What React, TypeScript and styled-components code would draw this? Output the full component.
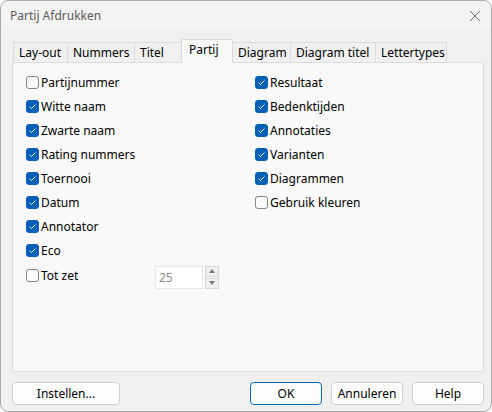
import React, { useState } from 'react';
import styled, { createGlobalStyle } from 'styled-components';

const GlobalStyle = createGlobalStyle`
  html, body {
    margin: 0;
    padding: 0;
    background: #ffffff;
  }
  body {
    font-family: "Noto Sans", "Open Sans", "Liberation Sans", sans-serif;
    font-size: 12px;
    color: #000;
  }
`;

const Window = styled.div`
  width: 492px;
  height: 412px;
  box-sizing: border-box;
  border: 1px solid #a9a9a9;
  border-radius: 8px;
  background: #f0f0f0;
  display: flex;
  flex-direction: column;
  overflow: hidden;
`;

const TitleBar = styled.div`
  height: 29px;
  display: flex;
  align-items: center;
  justify-content: space-between;
  padding: 0 6px 0 9px;
  background: #f3f3f3;
  color: #5c5c5c;
  font-size: 12px;
`;

const CloseButton = styled.div`
  width: 20px;
  height: 20px;
  display: flex;
  align-items: center;
  justify-content: center;
`;

const Body = styled.div`
  flex: 1;
  display: flex;
  flex-direction: column;
  padding: 9px 7px 6px 11px;
`;

const TabStrip = styled.div`
  display: flex;
  align-items: flex-end;
  height: 23px;
  padding-left: 1px;
`;

const Tab = styled.div<{ $active?: boolean; $width: number }>`
  width: ${({ $width }) => $width}px;
  height: ${({ $active }) => ($active ? '24px' : '20px')};
  box-sizing: border-box;
  padding: ${({ $active }) => ($active ? '0 0 4px 7px' : '0 0 0 5px')};
  display: flex;
  align-items: center;
  border: 1px solid #dcdcdc;
  border-bottom: none;
  margin-right: -1px;
  background: ${({ $active }) => ($active ? '#f9f9f9' : '#f0f0f0')};
  position: relative;
  z-index: ${({ $active }) => ($active ? 2 : 1)};
  margin-bottom: ${({ $active }) => ($active ? '-1px' : '0')};
  white-space: nowrap;
`;

const Panel = styled.div`
  height: 310px;
  box-sizing: border-box;
  border: 1px solid #dcdcdc;
  background: #f9f9f9;
  display: grid;
  grid-template-columns: 229px 1fr;
  padding: 7px 0 0 13px;
`;

const Column = styled.div`
  display: flex;
  flex-direction: column;
`;

const Row = styled.label`
  height: 24.1px;
  display: flex;
  align-items: center;
  gap: 2px;
`;

const Box = styled.span<{ $checked: boolean }>`
  width: 13px;
  height: 13px;
  box-sizing: border-box;
  border-radius: 3px;
  flex: none;
  display: flex;
  align-items: center;
  justify-content: center;
  background: ${({ $checked }) => ($checked ? '#005fb8' : '#fbfbfb')};
  border: 1px solid ${({ $checked }) => ($checked ? '#005fb8' : '#858585')};
`;

const SpinRow = styled.div`
  display: grid;
  grid-template-columns: 129px auto;
  align-items: center;
`;

const SpinField = styled.div`
  display: flex;
  align-items: center;
  gap: 2px;
  margin-top: 3px;
`;

const SpinInput = styled.div`
  width: 48px;
  height: 23px;
  box-sizing: border-box;
  background: #ffffff;
  border: 1px solid #e6e6e6;
  color: #8a8a8a;
  display: flex;
  align-items: center;
  padding-left: 3px;
`;

const SpinButtons = styled.div`
  display: flex;
  flex-direction: column;
  gap: 1px;
`;

const SpinButton = styled.div`
  width: 14px;
  height: 11px;
  box-sizing: border-box;
  border: 1px solid #d8d8d8;
  background: #f0f0f0;
  display: flex;
  align-items: center;
  justify-content: center;
`;

const Footer = styled.div`
  display: flex;
  align-items: center;
  margin-top: 10px;
  gap: 9px;
`;

const Button = styled.div<{ $primary?: boolean; $wide?: boolean }>`
  width: ${({ $wide }) => ($wide ? '108px' : '72px')};
  height: 23px;
  box-sizing: border-box;
  border-radius: 4px;
  background: #fdfdfd;
  border: 1px solid ${({ $primary }) => ($primary ? '#0067c0' : '#d0d0d0')};
  display: flex;
  align-items: center;
  justify-content: center;
`;

const Spacer = styled.div`
  flex: 1;
`;

const CheckMark = () => (
  <svg width="9" height="9" viewBox="0 0 9 9">
    <path d="M1.6 4.7 L3.5 6.5 L7.4 2.6" fill="none" stroke="#ffffff" strokeWidth="1" />
  </svg>
);

const Check: React.FC<{ label: string; checked: boolean; onToggle: () => void }> = ({
  label,
  checked,
  onToggle,
}) => (
  <Row onClick={onToggle}>
    <Box $checked={checked}>{checked && <CheckMark />}</Box>
    {label}
  </Row>
);

const tabs: [string, number][] = [
  ['Lay-out', 55],
  ['Nummers', 68],
  ['Titel', 48],
  ['Partij', 52],
  ['Diagram', 59],
  ['Diagram titel', 86],
  ['Lettertypes', 72],
];

const leftItems: [string, boolean][] = [
  ['Partijnummer', false],
  ['Witte naam', true],
  ['Zwarte naam', true],
  ['Rating nummers', true],
  ['Toernooi', true],
  ['Datum', true],
  ['Annotator', true],
  ['Eco', true],
];

const rightItems: [string, boolean][] = [
  ['Resultaat', true],
  ['Bedenktijden', true],
  ['Annotaties', true],
  ['Varianten', true],
  ['Diagrammen', true],
  ['Gebruik kleuren', false],
];

export default function App() {
  const [state, setState] = useState<Record<string, boolean>>(() => {
    const s: Record<string, boolean> = { 'Tot zet': false };
    [...leftItems, ...rightItems].forEach(([k, v]) => (s[k] = v));
    return s;
  });
  const toggle = (k: string) => setState((s) => ({ ...s, [k]: !s[k] }));

  return (
    <>
      <GlobalStyle />
      <Window>
        <TitleBar>
          <span>Partij Afdrukken</span>
          <CloseButton>
            <svg width="12" height="12" viewBox="0 0 12 12">
              <path d="M1 1 L11 11 M11 1 L1 11" stroke="#6e6e6e" strokeWidth="1" />
            </svg>
          </CloseButton>
        </TitleBar>
        <Body>
          <TabStrip>
            {tabs.map(([t, w]) => (
              <Tab key={t} $width={w} $active={t === 'Partij'}>
                {t}
              </Tab>
            ))}
          </TabStrip>
          <Panel>
            <Column>
              {leftItems.map(([k]) => (
                <Check key={k} label={k} checked={state[k]} onToggle={() => toggle(k)} />
              ))}
              <SpinRow>
                <Check label="Tot zet" checked={state['Tot zet']} onToggle={() => toggle('Tot zet')} />
                <SpinField>
                  <SpinInput>25</SpinInput>
                  <SpinButtons>
                    <SpinButton>
                      <svg width="6" height="4" viewBox="0 0 6 4">
                        <path d="M0 4 L3 0 L6 4 Z" fill="#7a7a7a" />
                      </svg>
                    </SpinButton>
                    <SpinButton>
                      <svg width="6" height="4" viewBox="0 0 6 4">
                        <path d="M0 0 L6 0 L3 4 Z" fill="#7a7a7a" />
                      </svg>
                    </SpinButton>
                  </SpinButtons>
                </SpinField>
              </SpinRow>
            </Column>
            <Column>
              {rightItems.map(([k]) => (
                <Check key={k} label={k} checked={state[k]} onToggle={() => toggle(k)} />
              ))}
            </Column>
          </Panel>
          <Footer>
            <Button $wide>Instellen...</Button>
            <Spacer />
            <Button $primary>OK</Button>
            <Button>Annuleren</Button>
            <Button>Help</Button>
          </Footer>
        </Body>
      </Window>
    </>
  );
}
